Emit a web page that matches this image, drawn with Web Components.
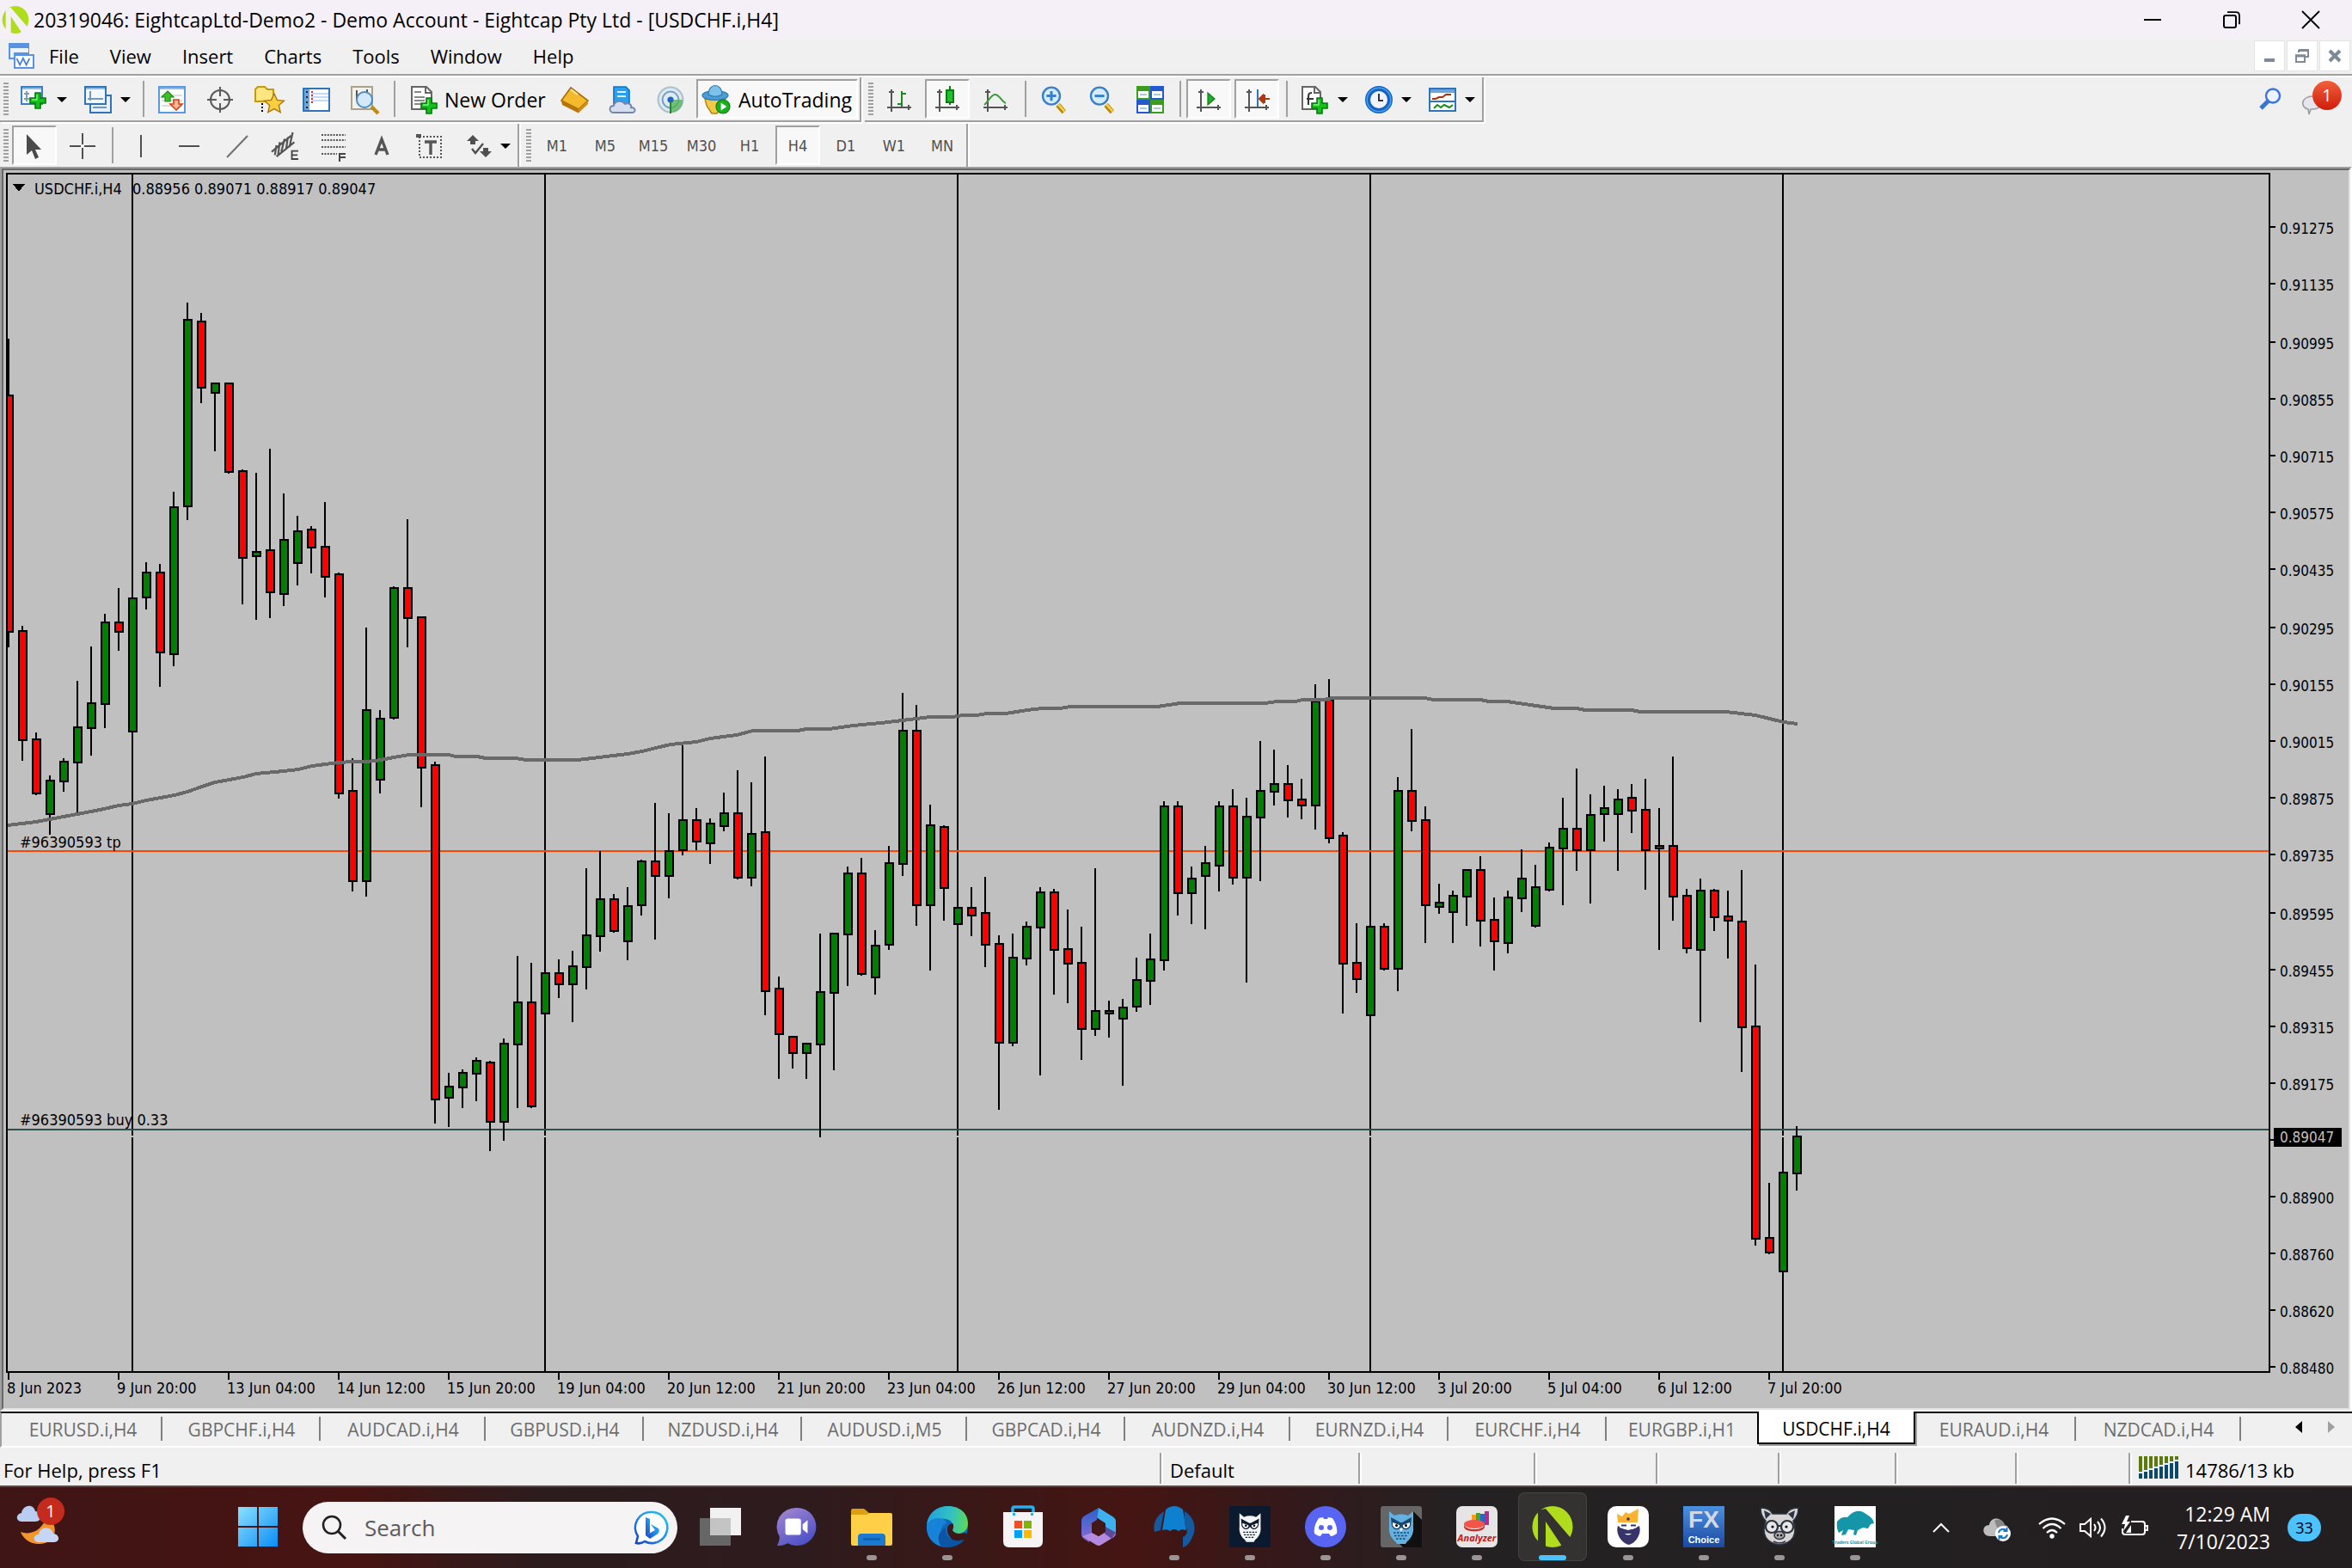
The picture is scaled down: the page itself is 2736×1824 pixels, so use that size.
<!DOCTYPE html>
<html lang="en">
<head>
<meta charset="utf-8">
<title>20319046: EightcapLtd-Demo2 - Demo Account</title>
<style>
  html, body { margin: 0; height: 100%; background: #f0f0f0; overflow: hidden; }
  body { font: 22px/30px "Open Sans", "Noto Sans", sans-serif; color: #000; }
  trade-app { --face: #f0f0f0; --shade: #a0a0a0; --dark: #696969; --silver: #c0c0c0;
    --chart-font: "DejaVu Sans Condensed", "DejaVu Sans", sans-serif; }
</style>
</head>
<body>
<trade-app></trade-app>
<script>
const RESET = `*{box-sizing:border-box} button{font:inherit;color:inherit;background:none;border:0;padding:0;margin:0;display:flex;align-items:center;justify-content:center} svg{display:block}`;
function define(name, css, html, ready) {
  customElements.define(name, class extends HTMLElement {
    constructor() { super(); this.attachShadow({ mode: 'open' }); }
    connectedCallback() {
      if (this.shadowRoot.firstChild) return;
      const body = typeof html === 'function' ? html(this) : html;
      this.shadowRoot.innerHTML = `<style>${RESET}${css}</style>${body}`;
      if (ready) ready(this);
    }
  });
}

/* ---------- icons: [view box size, markup] ---------- */
const plus = (x, y) => `<path d="M${x+3} ${y}h3v3h3v3h-3v3h-3v-3h-3v-3h3z" fill="#12c01c" stroke="#067a0b" stroke-width=".8"/><path d="M${x+4} ${y+1}v3h-3" stroke="#7df27f" fill="none" stroke-width=".7"/>`;
const axes = `<path d="M3.5 15V2M1 12.5h14" stroke="#555" stroke-width="1" fill="none"/><path d="M2 3.5h3M13.5 11v3" stroke="#555" stroke-width="1"/>`;
const lens = `<path d="M10.3 11l3.6 4.2" stroke="#b88710" stroke-width="3"/><path d="M10.6 10.8l3.6 4" stroke="#f4d14a" stroke-width="1.3"/><circle cx="6.5" cy="5.8" r="5" fill="#d4ecfb" stroke="#3b7fc4" stroke-width="1.2"/>`;
const owlFace = (c, e) => `<path d="M10 6l6 5c5-2 11-2 16 0l6-5v18c1 8-3 14-7 17l-2 3H19l-2-3c-4-3-8-9-7-17z" fill="${c}"/><path d="M12 13l11 6h2l11-6-1 10c-2 5-8 6-11 1-3 5-9 4-11-1z" fill="${e}"/><path d="M14 19l8 3c1 4-6 6-8 0zM34 19l-8 3c-1 4 6 6 8 0z" fill="#fff"/><circle cx="18.500" cy="22.500" r="1.500"/><circle cx="29.500" cy="22.500" r="1.500"/><path d="M22 26h4l-2 4z" fill="#fff"/><path d="M15 31h18M16 34.500h16M18 38h12" stroke="${e}" stroke-width="1.400" stroke-dasharray="2.500 1.500"/>`;
const ICONS = {
  logo: [48, `<ellipse cx="24" cy="24" rx="23" ry="24" fill="#b0dc1e"/><path d="M7 5L16 3 46 38 41 45 36 48 16 18V48L7 42z" fill="#f5f0f8"/>`],
  mdi: [16, `<g fill="#eaf4ff" stroke="#5a94e0" shape-rendering="crispEdges"><path d="M.500.500h12v9H.500z"/><path d="M.500 2h12" stroke-width="2"/><path d="M3.500 6.500h9v9h-9z"/><path d="M3.500 8h12" stroke-width="2"/><path d="M3.500 7.500h12v8h-12z" fill="#fff"/></g><path d="M5 9.500l2 4 2-4 2 4 2-4" fill="none" stroke="#4a84d6"/>`],
  newchart: [16, `<path d="M.500.500h12v10h-12z" fill="#f4faff" stroke="#3b7fc4"/><path d="M1 1.500h11" stroke="#8dbcea"/><path d="M3.500 3v6M2 4.500h3M2 7.500h3" stroke="#7f9db9"/>${plus(5.500,4)}`],
  profiles: [16, `<path d="M3.500 5.500h12v10h-12z" fill="#e6f1fb" stroke="#2f74b8"/><path d="M.500.500h12v10h-12z" fill="#f1f8ff" stroke="#2f74b8"/><path d="M1 1.500h11" stroke="#8dbcea"/><path d="M3.500 3v5.500M2 7.500h9M5 12.500h8" stroke="#7496b8"/>`],
  market: [16, `<path d="M.500.500h15v15H.500z" fill="#fff" stroke="#5a9ae0"/><path d="M1 1.500h14" stroke="#8dbcea"/><path d="M2 5.500h12M2 8.500h12M2 11.500h12" stroke="#ddd"/><path d="M5.500 3L9 6.500H7V9H4V6.500H2z" fill="#3fc02a" stroke="#1f8a12" stroke-width=".6"/><path d="M10.500 14L7 10.500h2V8h3v2.500h2z" fill="#ffb59a" stroke="#d8420e" stroke-width=".8"/>`],
  cross: [16, `<circle cx="8" cy="8" r="5.500" fill="none" stroke="#5a5a5a"/><path d="M8 .500v5.500M8 10v5.500M.500 8H6M10 8h5.500" stroke="#5a5a5a"/>`],
  favs: [16, `<path d="M.500 9V2l1.500-1.500h4L7.500 2H11v7z" fill="#ffe680" stroke="#c49a10"/><path d="M4.500 10v5" stroke="#000" stroke-dasharray="1 1"/><path d="M11.500 4.500l1.700 3.700 4 .4-3 2.700.9 4-3.600-2-3.600 2 .9-4-3-2.700 4-.4z" fill="#f8cf3f" stroke="#a9770c" stroke-width=".7"/>`],
  panel: [16, `<path d="M.500 1.500h15v13H.500z" fill="#fff" stroke="#2f74b8"/><path d="M1 2h3v12H1z" fill="#6aa6dc"/><path d="M2.500 3v11" stroke="#222" stroke-dasharray="1 2"/><path d="M5 4.500h10M5 6.500h10M5 8.500h10" stroke="#c4d8f8"/><path d="M5.500 3v7" stroke="#e03030" stroke-dasharray="1 1"/>`],
  tester: [16, `<path d="M.500.500h12v13H.500z" fill="#f3f1ea" stroke="#a9a28c"/><path d="M3.500 2.500v5M9.500 2v3" stroke="#555"/><circle cx="8" cy="8" r="4.500" fill="#cfe8fb" fill-opacity=".9" stroke="#4d8ac6"/><path d="M12 12l4 4" stroke="#c08d12" stroke-width="2.200"/>`],
  order: [16, `<path d="M.500.500H9l3 3v10H.500z" fill="#fff" stroke="#666"/><path d="M8.500 1v3h3" fill="none" stroke="#666"/><path d="M2 3.500h4M2 6.500h6M2 8.500h6M2 10.500h5" stroke="#888"/>${plus(6,7)}`],
  gold: [16, `<path d="M6 1l10 7.500-5.500 5L.500 8.500z" fill="#f5b92e" stroke="#a86c08" stroke-width=".8"/><path d="M.500 8.500l10 5v2.300L1 11z" fill="#b8730b"/><path d="M16 8.500v2l-5.500 5.300v-2.300z" fill="#d38e17"/><path d="M6 2l4 3" stroke="#ffe9a0"/>`],
  cloudbox: [16, `<path d="M3 .500h7l2 2v8H3z" fill="#2aa0f0" stroke="#1270c0" stroke-width=".8"/><path d="M5 3.500h5M5 6h5" stroke="#d8f0ff"/><path d="M3 15.500c-3 0-3-4 0-4 .5-3 5-3.500 6.500-1 3-1 4 1 3.500 2 3 0 3 3 .5 3z" fill="#d5deef" stroke="#7485aa" stroke-width=".9"/>`],
  signal: [16, `<circle cx="8" cy="8" r="7.200" fill="#dfe9ee" stroke="#a9bfcc"/><circle cx="8" cy="8" r="4.700" fill="none" stroke="#6f9fc8"/><path d="M8 8h7a7 7 0 0 1-7 7.500z" fill="#4fb04f" opacity=".75"/><circle cx="8" cy="8" r="1.800" fill="#2060d0"/><path d="M8 9v7" stroke="#18901c"/>`],
  auto: [17, `<path d="M2 8h12l-2 5-3 3.500H6L3 12z" fill="#f3c848" stroke="#b0820f" stroke-width=".7"/><ellipse cx="8" cy="6" rx="7.500" ry="2.700" fill="#4c9fd6" stroke="#2c78b0" stroke-width=".6"/><path d="M4 5.500c0-7 8-7 8 0-2 1.500-6 1.500-8 0z" fill="#7cc2ea" stroke="#2c78b0" stroke-width=".6"/><circle cx="12.500" cy="12.500" r="4" fill="#18b020" stroke="#0b7d10" stroke-width=".6"/><path d="M11.300 10.300v4.400l3.400-2.200z" fill="#fff"/>`],
  bars: [16, axes + `<path d="M9.500 3v9M9.500 4.500H12M7 10.500h2.500" stroke="#1a8a1a" fill="none"/>`],
  candles: [16, axes + `<path d="M9.500 0v11" stroke="#0b7d10"/><path d="M7.500 2.500h4v7h-4z" fill="#20c030" stroke="#0b7d10"/>`],
  line: [16, axes + `<path d="M1.500 11C4 9 5 5.500 7.500 5s4 4 6.500 5" stroke="#3c9a3c" fill="none"/>`],
  zoomin: [16, lens + `<path d="M6.500 3v5.600M3.700 5.800h5.600" stroke="#3b7fc4" stroke-width="1.500"/>`],
  zoomout: [16, lens + `<path d="M3.700 5.800h5.600" stroke="#3b7fc4" stroke-width="1.500"/>`],
  tile: [16, `<path d="M0 0h8v8H0zM8 8h8v8H8z" fill="#3c9c1e"/><path d="M8 0h8v8H8zM0 8h8v8H0z" fill="#2458d0"/><path d="M1 3h6v4H1zM9 3h6v4H9zM1 11h6v4H1zM9 11h6v4H9z" fill="#fff"/><path d="M2 5h4M10 5h4M2 13h4M10 13h4" stroke="#a8c8e8"/>`],
  scroll: [16, axes + `<path d="M7.500 4v7l4-3.500z" fill="#1fae2a" stroke="#0b7d10" stroke-width=".6"/>`],
  shift: [16, axes + `<path d="M8.500 2v10" stroke="#2f74b8"/><path d="M9.500 7.500h6M12.500 5v5M9.500 7.500l2-2v4z" stroke="#b0380c" fill="#b0380c"/>`],
  indic: [16, `<path d="M.500.500H8l3 3v10H.500z" fill="#fff" stroke="#666"/><path d="M7.500 1v3h3" fill="none" stroke="#666"/><path d="M6 4c-2 0-2 1-2 3v4M3 7.500h4" stroke="#333" fill="none"/>${plus(6,7)}`],
  clock: [16, `<circle cx="8" cy="8" r="6.500" fill="#eef4fa" stroke="#1763c4" stroke-width="3"/><circle cx="8" cy="8" r="6.900" fill="none" stroke="#45a0f0" stroke-width=".8"/><path d="M8 4.500v4h2.500" stroke="#333" fill="none"/>`],
  tmpl: [16, `<path d="M.500 1.500h15v13H.500z" fill="#fff" stroke="#2f74b8"/><path d="M1 2h14v2H1z" fill="#6aa6dc"/><path d="M1 9h14" stroke="#2f74b8"/><path d="M2 7.500h2l2-1h2l2-1.500h3" stroke="#a83010" fill="none"/><path d="M3 13l2-2 2 1.500L9 11l3 1.500 2-1.500" stroke="#1a8a1a" fill="none"/>`],
  arrowcur: [16, `<path d="M3.500 1v12l3-2.500 2 5 2-1-2-4.500H12z" fill="#4a4a4a"/>`],
  plain: [16, `<path d="M8 .500V7M8 9v6.500M.500 8H7M9 8h6.500" stroke="#505050"/>`],
  vline: [16, `<path d="M8 1.500v13" stroke="#505050"/>`],
  hline: [16, `<path d="M2 8h12" stroke="#505050"/>`],
  tline: [16, `<path d="M2 14.500L14 2" stroke="#707070"/>`],
  channel: [17, `<path d="M0 12L12 2M3 15L14 6M3 8l-1 6M5 6l-1 8M8 4L6 12M10 3L9 10M13 0l-2 9" stroke="#555" stroke-width="1.200"/><path d="M16.500 11.500h-4v5h4M12.500 14h3.500" stroke="#444" fill="none"/>`],
  fibo: [16, `<path d="M1 1.500h14M1 4.500h14M1 8.500h14M1 12.500h9" stroke="#555" stroke-dasharray="1 .7"/><path d="M15 12.500h-3.500V17M11.500 14.500H15" stroke="#444" fill="none"/>`],
  texta: [16, `<path d="M4.500 13L8 4l3.500 9M5.500 10h5" stroke="#555" stroke-width="1.700" fill="none"/>`],
  textt: [16, `<path d="M2 2.500h12.500v12H2z" fill="none" stroke="#555" stroke-dasharray="1 1"/><path d="M0 1h3v2H0z" fill="#555"/><path d="M5 5.500h7M8.500 5.500V13" stroke="#555" stroke-width="1.700"/>`],
  shapes: [16, `<path d="M5 1.500l3.500 3.500h-2v2h-3V5h-2zM12.500 14.500L9 11h2V9h3v2h2z" fill="#505050"/><path d="M4.500 9.500l2 2.500 4.500-5.500" stroke="#505050" fill="none" stroke-width="1.200"/>`],
  find: [26, `<path d="M2 24l9-9" stroke="#3b74d0" stroke-width="5"/><circle cx="16" cy="9.500" r="8" fill="#eef4ff" stroke="#3b74e0" stroke-width="2.400"/>`],
  bubble: [24, `<path d="M12 2c14 0 14 15 0 15h-2l-2 6-1-6C-3 15-1 2 12 2z" fill="#e6e6ec" stroke="#9c9ca2" stroke-width="1.600"/>`],
  /* window controls */
  wmin: [20, `<path d="M0 10h20" stroke="#000" stroke-width="2"/>`],
  wmax: [20, `<rect x="1" y="5" width="14" height="14" rx="2" fill="none" stroke="#000" stroke-width="2"/><path d="M5 1.200h10q4 0 4 4v10" fill="none" stroke="#000" stroke-width="1.800"/>`],
  wclose: [20, `<path d="M0 0l20 20M20 0L0 20" stroke="#000" stroke-width="1.800"/>`],
  cmin: [16, `<path d="M2 13h12" stroke="#7d8b99" stroke-width="4"/>`],
  cmax: [16, `<path d="M4 4V2h11v7h-3" fill="none" stroke="#7d8b99" stroke-width="2"/><path d="M4 1.500h12" stroke="#7d8b99" stroke-width="3"/><path d="M1 7.500h10V15H1z" fill="#fff" stroke="#7d8b99" stroke-width="2"/><path d="M0 8h12" stroke="#7d8b99" stroke-width="3"/>`],
  cclose: [16, `<path d="M2 2l12 12M14 2L2 14" stroke="#7d8b99" stroke-width="4"/>`],
  /* taskbar, 48 box */
  weather: [56, `<path d="M6 33c10 4 24 0 30-17 16 8 12 31-9 31-10 0-18-6-21-14z" fill="#f0962c"/><path d="M7 21c-7 0-7-9 0-10 2-10 14-11 16-2 8 0 9 12 0 12z" fill="#b9cdf0"/><path d="M27 45c-7 0-7-9 0-9 1-10 15-10 17-1 8 1 8 10 1 10z" fill="#c5d6f6"/>`],
  start: [48, `<defs><linearGradient id="g" x1="0" y1="0" x2="48" y2="48" gradientUnits="userSpaceOnUse"><stop offset="0" stop-color="#8ce0ff"/><stop offset="1" stop-color="#0b8df5"/></linearGradient></defs><path d="M0 0h23v23H0zM25 0h23v23H25zM0 25h23v23H0zM25 25h23v23H25z" fill="url(#g)"/>`],
  searchglass: [30, `<circle cx="12" cy="12" r="10" fill="none" stroke="#222" stroke-width="2.600"/><path d="M19 19l9 9" stroke="#222" stroke-width="3"/>`],
  bing: [40, `<defs><linearGradient id="g" x1="0" y1="1" x2="1" y2="0"><stop offset="0" stop-color="#1a3fb8"/><stop offset=".5" stop-color="#1f8ff0"/><stop offset="1" stop-color="#22c8e8"/></linearGradient></defs><path d="M20 2a18 18 0 1 1-8 34c-3 2-6 3-10 2l2-8A18 18 0 0 1 20 2z" fill="#fff" stroke="url(#g)" stroke-width="2.600"/><path d="M13 8l5 2v16l-5 3zM19 16l9 5c2 3 0 6-2 7l-8 5-5-4 11-6z" fill="url(#g)"/>`],
  taskview: [48, `<path d="M12 2h36v32H12z" fill="#f1f1f1"/><path d="M0 14h36v32H0z" fill="#666"/><path d="M12 14h24v20H12z" fill="#c4c4c4"/>`],
  chat: [48, `<defs><linearGradient id="g" x1="0" y1="0" x2=".6" y2="1"><stop offset="0" stop-color="#a88ad0"/><stop offset="1" stop-color="#4f52c8"/></linearGradient></defs><path d="M25 1a23 23 0 1 1-11 43c-4 2-8 3-13 3 2-4 3-7 3-11A23 23 0 0 1 25 1z" fill="url(#g)"/><rect x="11" y="14" width="19" height="20" rx="3" fill="#fff"/><path d="M32 21l6-5v16l-6-5z" fill="#fff"/>`],
  folder: [48, `<path d="M0 5q0-2 2-2h13l6 5h24v36H0z" fill="#dd9f12"/><path d="M0 10h18l4-2h24q2 0 2 2v34q0 2-2 2H2q-2 0-2-2z" fill="#ffcf48"/><path d="M8 46V36q0-4 4-4h24q4 0 4 4v10z" fill="#1a7ad0"/><path d="M14 38.500h20" stroke="#0c5aa8" stroke-width="2"/>`],
  edge: [48, `<defs><linearGradient id="g" x1="0" y1=".3" x2="1" y2=".4"><stop offset="0" stop-color="#1fa0e0"/><stop offset=".6" stop-color="#33c2c0"/><stop offset="1" stop-color="#5ad858"/></linearGradient></defs><circle cx="24" cy="24" r="24" fill="#0e68b8"/><path d="M0 22C2 6 14 0 25 0c14 0 23 9 23 20 0 8-6 12-12 12-5 0-8-2-6-5 2-4 0-11-8-12C12 14 2 18 0 22z" fill="url(#g)"/><path d="M0 23c1-6 8-9 14-9 6 0 9 4 9 6-8 2-9 16 3 24-2 3-6 4-9 3C6 44-1 34 0 23z" fill="#1683d8"/><path d="M30 28c2 4 8 5 14 3l4 2v6l-4 2c-10 4-20-4-20-14 0-4 2-6 6-7 2 2 1 6 0 8z" fill="#3b181a"/><path d="M22 26c-1 10 8 17 22 13-6 8-20 11-27 8-6-9-3-19 5-21z" fill="#0c55a4"/>`],
  store: [48, `<path d="M12 12V3q0-2 2-2h20q2 0 2 2v9" fill="none" stroke="#26b0f0" stroke-width="3.500"/><path d="M1 7h46v34q0 7-7 7H8q-7 0-7-7z" fill="#f6f4f4"/><path d="M12 8h3v3h-3zM33 8h3v3h-3z" fill="#26b0f0"/><path d="M14 17h9v9h-9z" fill="#f04e23"/><path d="M25 17h9v9h-9z" fill="#7db700"/><path d="M14 28h9v9h-9z" fill="#00a2ed"/><path d="M25 28h9v9h-9z" fill="#fdb900"/>`],
  m365: [48, `<defs><linearGradient id="g" x1="0" y1="0" x2="0" y2="1"><stop offset="0" stop-color="#2b62c8"/><stop offset="1" stop-color="#8a6ad8"/></linearGradient></defs><path d="M24 2l16 10q4 2 4 6v13L31 24v-4l-12-9z" fill="#3db0ee"/><path d="M24 2l-2 14-6 4v12l-3 10-6-4q-3-2-3-5V17q0-4 4-6z" fill="url(#g)"/><path d="M5 35l11-4 8 4 8-5 12 1q0 4-4 6L27 45q-3 2-6 0z" fill="#b48ae0"/><path d="M32 24l12 7-5 7-8-6z" fill="#5c4a9c"/><path d="M24 15l8 5v10l-8 5-8-5V20z" fill="#431617"/>`],
  wing: [48, `<path d="M14 4Q24-4 34 4l4 24q-6-2-9 1-5-4-10 0-3-3-9-1z" fill="#0f80cf"/><path d="M12 6C2 12-1 22 1 30l7-2zM36 6c13 8 14 22 8 32-2 5-6 9-10 10V36c6-2 6-10 2-14z" fill="#155a9e"/>`],
  owl: [48, `<path d="M0 0h48v48H0z" fill="#0b1a2e"/><g transform="translate(3 3) scale(.88)">${owlFace('#f4f4f4','#0b1a2e')}</g>`],
  discord: [48, `<circle cx="24" cy="24" r="24" fill="#5865f2"/><path d="M16 14l5-1 1 2h4l1-2 5 1c4 6 6 12 5 18-3 2-5 3-7 3l-2-3h-8l-2 3c-2 0-4-1-7-3-1-6 1-12 5-18z" fill="#fff"/><circle cx="19" cy="25" r="3" fill="#5865f2"/><circle cx="29" cy="25" r="3" fill="#5865f2"/>`],
  owl2: [48, `<rect width="48" height="48" rx="3" fill="#666"/><path d="M38 6l10 10v32H26l-8-8z" fill="#101010"/>${owlFace('#64b0e0','#17476c')}`],
  analyzer: [48, `<rect width="48" height="48" rx="7" fill="#e6e4e4"/><path d="M18 10h5v12h-5z" fill="#f0a020"/><path d="M23 8h5v16h-5z" fill="#3fa82c"/><path d="M28 9h5v14h-5z" fill="#2468c8"/><path d="M33 6h5v16h-5z" fill="#b02c90"/><ellipse cx="21" cy="21" rx="12" ry="5" fill="#f2554a"/><path d="M9 21c0 8 24 8 24 0v3c0 7-24 7-24 0z" fill="#c82820"/>`],
  n: [48, `<ellipse cx="24" cy="24" rx="23.500" ry="24" fill="#b0dc1e"/><path d="M7 5L16 3 46 38 41 45 36 48 16 18V48L7 42z" fill="#343131"/>`],
  beard: [48, `<rect width="48" height="48" rx="10" fill="#fff"/><path d="M12 19L11 9l6 3 4-5 4 2 11-6-1 16z" fill="#f9b233"/><path d="M12 23l8 4c3-2 6-2 9 0l8-4c3 9-4 20-12 22-9-2-16-13-13-22z" fill="#37336b"/><path d="M14 20h20v5l-10 3-10-3z" fill="#fff"/><path d="M16 22.500h6M27 22.500h6" stroke="#37336b" stroke-width="2"/><path d="M20 32q4 3 8 0z" fill="#fff"/><circle cx="24" cy="15" r="1.800" fill="#37336b"/>`],
  fx: [48, `<defs><linearGradient id="g" x1="0" y1="0" x2="0" y2="1"><stop offset="0" stop-color="#4a90e0"/><stop offset="1" stop-color="#1c48a0"/></linearGradient></defs><path d="M0 0h48v48H0z" fill="url(#g)"/>`],
  pig: [48, `<path d="M2 2q11 0 14 7h16q3-7 14-7 0 10-6 15 6 18-6 25-10 6-20 0-12-7-6-25-6-5-6-15z" fill="#d8d4d4" stroke="#2a3340" stroke-width="1.600"/><path d="M6 5l8 4-6 6zM42 5l-8 4 6 6z" fill="#2a3340"/><circle cx="15" cy="24" r="7" fill="#e8e6e6" stroke="#2a3340" stroke-width="2.200"/><circle cx="33" cy="24" r="7" fill="#e8e6e6" stroke="#2a3340" stroke-width="2.200"/><path d="M22 23h4" stroke="#2a3340" stroke-width="2"/><circle cx="16" cy="24" r="1.600"/><circle cx="32" cy="24" r="1.600"/><ellipse cx="24" cy="34" rx="6" ry="4.500" fill="#aaa5a5" stroke="#2a3340" stroke-width="1.500"/><circle cx="22" cy="34" r="1.200"/><circle cx="26" cy="34" r="1.200"/><path d="M17 41q7 4 14 0" stroke="#2a3340" fill="none" stroke-width="1.500"/>`],
  bull: [48, `<path d="M0 0h48v48H0z" fill="#fff"/><path d="M3 18Q8 12 15 13 26 0 38 10q7 4 8 10l-4 1-3 5-6-1-6 3-2 6-3-1 1-5-7-1-3 6-5 1 2-6-5 3q-3-5-2-13z" fill="#1596a8"/>`],
  chev: [20, `<path d="M1 15l9-9 9 9" fill="none" stroke="#fff" stroke-width="2"/>`],
  cloud: [32, `<path d="M8 26C-2 26-2 13 7 13 8 3 22 3 24 13c8 0 8 13 0 13z" fill="#bdbdbd"/><path d="M13 8c6-4 12 0 13 9l-8 4z" fill="#888"/><circle cx="23" cy="23" r="9" fill="#fff"/><path d="M18 22a5 5 0 0 1 9-2M28 24a5 5 0 0 1-9 2M27.500 16v4h-4M18.500 30v-4h4" stroke="#1878d0" fill="none" stroke-width="2"/>`],
  wifi: [32, `<path d="M1 12Q16-1 31 12M5.500 17Q16 7 26.500 17M10 22Q16 16 22 22" fill="none" stroke="#fff" stroke-width="2.300"/><circle cx="16" cy="26" r="2.700" fill="#fff"/>`],
  sound: [32, `<path d="M1 12h5l7-6v20l-7-6H1z" fill="none" stroke="#fff" stroke-width="2"/><path d="M17 12q3 4 0 8M21 9q6 7 0 14M25 5.500q9 10.500 0 21" fill="none" stroke="#fff" stroke-width="2"/>`],
  batt: [32, `<path d="M12 9h13q3 0 3 3v9q0 3-3 3H5q-3 0-3-3v-4M28 14h3v5h-3" fill="none" stroke="#fff" stroke-width="2"/><path d="M6 2L1 12h4l-2 8 8-11H7l3-7zM12 13l-6 9h6z" fill="#fff"/>`],
};
define('ui-icon', `:host{display:block;flex:none} svg{width:100%;height:100%;overflow:visible}`, el => {
  const [box, art] = ICONS[el.getAttribute('name')];
  const s = (el.getAttribute('size') || 32) + 'px';
  el.style.width = s; el.style.height = s;
  return `<svg viewBox="0 0 ${box} ${box}" aria-hidden="true">${art}</svg>`;
});

/* ---------- title and menu ---------- */
define('title-bar', `
  :host{display:flex;align-items:center;height:46px;background:#f5f0f8;padding:0 2px}
  h1{margin:0 0 0 5px;font:inherit;font-size:23px;flex:1;white-space:nowrap}
  button{width:92px;height:46px}`,
  `<ui-icon name="logo"></ui-icon><h1><slot></slot></h1>
   <button aria-label="Minimize"><ui-icon name="wmin" size="20"></ui-icon></button>
   <button aria-label="Restore"><ui-icon name="wmax" size="20"></ui-icon></button>
   <button aria-label="Close"><ui-icon name="wclose" size="20"></ui-icon></button>`);

define('menu-bar', `
  :host{display:block;border-bottom:2px solid #fff}
  div{display:flex;align-items:center;height:42px;padding:0 2px 2px 10px;border-bottom:2px solid var(--shade)}
  nav{display:flex;flex:1;padding-left:17px;gap:36px}
  .w{display:flex;gap:2px}
  .w button{width:36px;height:36px;background:#fff;border:1px solid #e4e4e4}`,
  `<div><ui-icon name="mdi" size="30"></ui-icon>
   <nav>${'File View Insert Charts Tools Window Help'.split(' ').map(t => `<button>${t}</button>`).join('')}</nav>
   <span class="w"><button aria-label="Minimize chart"><ui-icon name="cmin" size="16"></ui-icon></button>
   <button aria-label="Restore chart"><ui-icon name="cmax" size="16"></ui-icon></button>
   <button aria-label="Close chart"><ui-icon name="cclose" size="16"></ui-icon></button></span></div>`);

/* ---------- toolbars ---------- */
define('tool-button', `
  :host{display:flex;flex:none;width:56px;padding:2px;height:50px}
  :host([drop]){width:74px} :host([drop]) button{justify-content:flex-start;padding-left:8px;gap:10px}
  button{flex:1;border:2px solid transparent;padding-top:2px;font-size:23px;white-space:nowrap}
  :host([on]) button{background:#f8f8f8;border-color:var(--shade) #fff #fff var(--shade)}
  :host([small]) button{font:18px/22px var(--chart-font);color:#505050}
  :host([order]){width:176px} :host([order]) button{justify-content:flex-start;padding-left:10px;gap:7px}
  :host([auto]){width:192px} :host([auto]) button{justify-content:flex-start;padding-left:4px;gap:9px}
  i{width:0;height:0;border:6px solid transparent;border-top-color:#000;border-bottom:0}`,
  el => `<button aria-label="${el.title || el.textContent}">${el.hasAttribute('icon') ? `<ui-icon name="${el.getAttribute('icon')}" size="${el.hasAttribute('auto') ? 34 : 32}"></ui-icon>` : ''}<slot></slot>${el.hasAttribute('drop') ? '<i></i>' : ''}</button>`);
define('tool-sep', `:host{display:block;flex:none;width:12px;padding:4px 4px 4px 6px;height:50px} div{height:42px;border-left:2px solid var(--shade)}`, `<div></div>`);
define('tool-group', `
  :host{display:flex;flex:none;height:50px;margin-right:4px;padding-left:4px;border-right:2px solid var(--shade);box-shadow:2px 0 #fff}
  :host([lined]){height:52px;border-bottom:2px solid var(--shade);box-shadow:2px 2px #fff}
  span{flex:none;width:6px;height:38px;margin:6px 2px 0 0;background:repeating-linear-gradient(var(--shade) 0 2px,transparent 2px 4px)}`,
  `<span></span><slot></slot>`);
define('tool-row', `:host{display:flex;height:54px} :host([last]){height:50px} .end{margin-left:auto;display:flex;align-items:flex-start;gap:24px;padding:12px 12px 0 0}`,
  `<slot></slot><div class="end"><slot name="end"></slot></div>`);
define('news-badge', `
  :host{display:block;position:relative;width:46px;height:32px}
  ui-icon{margin-top:8px} b{position:absolute;left:12px;top:-8px;width:34px;height:34px;border-radius:50%;background:linear-gradient(#f0603c,#d01c0c);color:#fff;font:20px/34px "Open Sans",sans-serif;text-align:center}`,
  `<ui-icon name="bubble" size="24"></ui-icon><b>1</b>`);

const tb = (icon, title, extra = '') => `<tool-button icon="${icon}" title="${title}" ${extra}></tool-button>`;
const SEP = '<tool-sep></tool-sep>';
const ROW1 = `<tool-row><tool-group lined>${tb('newchart','New Chart','drop')}${tb('profiles','Profiles','drop')}${SEP}
${tb('market','Market Watch')}${tb('cross','Data Window')}${tb('favs','Navigator')}${tb('panel','Terminal')}${tb('tester','Strategy Tester')}${SEP}
<tool-button order icon="order">New Order</tool-button>${tb('gold','MetaEditor')}${tb('cloudbox','Hosting')}${tb('signal','Signals')}
<tool-button auto on icon="auto">AutoTrading</tool-button></tool-group>
<tool-group lined>${tb('bars','Bar Chart')}${tb('candles','Candlesticks','on')}${tb('line','Line Chart')}${SEP}
${tb('zoomin','Zoom In')}${tb('zoomout','Zoom Out')}${tb('tile','Tile Windows')}${SEP}
${tb('scroll','Auto Scroll','on')}${tb('shift','Chart Shift','on')}${SEP}
${tb('indic','Indicators','drop')}${tb('clock','Periods','drop')}${tb('tmpl','Templates','drop')}</tool-group>
<ui-icon slot="end" name="find" size="26"></ui-icon><news-badge slot="end"></news-badge></tool-row>`;
const ROW2 = `<tool-row last><tool-group>${tb('arrowcur','Cursor','on')}${tb('plain','Crosshair')}${SEP}
${tb('vline','Vertical Line')}${tb('hline','Horizontal Line')}${tb('tline','Trendline')}${tb('channel','Channel')}${tb('fibo','Fibonacci')}${tb('texta','Text')}${tb('textt','Text Label')}${tb('shapes','Arrows','drop')}</tool-group>
<tool-group>${'M1 M5 M15 M30 H1 H4 D1 W1 MN'.split(' ').map(t => `<tool-button small ${t === 'H4' ? 'on' : ''}>${t}</tool-button>`).join('')}</tool-group></tool-row>`;

/* ---------- chart ---------- */
/* each candle: high, body top, body bottom, low; R falls, G rises */
const CANDLES = `R394,459,736,753 R728,733,862,885 R852,859,924,925 G902,907,948,971 G882,885,910,921 G792,845,888,945 G752,817,848,879 G714,723,820,847 R684,723,736,757 G695,695,852,852
G654,665,696,709 R656,665,760,799 G572,589,762,775 G352,371,590,605 R364,373,452,469 G445,445,458,525 R445,445,550,551 R546,547,650,703 G550,641,648,721 R522,639,690,719
G574,627,692,705 G600,617,656,681 R612,615,638,667 R584,635,672,695 R666,667,924,929 R882,919,1026,1037 G730,825,1026,1043 G826,835,908,923 G682,683,836,837 R604,683,720,753
R717,717,894,939 R886,889,1280,1307 G1248,1263,1278,1311 G1244,1247,1266,1289 G1230,1233,1250,1281 R1234,1235,1306,1339 G1208,1213,1306,1327 G1112,1165,1216,1289 R1120,1165,1288,1289 G1131,1131,1180,1180
R1116,1131,1146,1161 G1106,1123,1146,1189 G1010,1087,1126,1151 G990,1045,1090,1107 R1040,1045,1084,1085 G1032,1053,1096,1117 G1000,1001,1054,1065 R934,1001,1020,1093 G946,989,1020,1045 G866,953,990,995
R940,953,980,989 G952,957,982,1005 G922,945,962,967 R896,945,1022,1023 G910,969,1022,1031 R880,967,1154,1181 R1136,1149,1204,1255 R1205,1205,1226,1243 G1213,1213,1226,1255 G1086,1153,1216,1323
G1085,1085,1156,1245 G1008,1015,1088,1147 R998,1015,1134,1135 G1082,1099,1138,1157 G984,1003,1100,1105 G806,849,1006,1019 R820,849,1054,1077 G936,959,1054,1129 R960,961,1034,1071 G1055,1055,1076,1076
R1032,1055,1066,1089 R1020,1061,1100,1125 R1088,1097,1214,1291 G1086,1113,1214,1217 G1072,1077,1116,1123 G1032,1037,1080,1251 R1034,1037,1106,1157 R1058,1103,1122,1167 R1078,1119,1198,1233 G1010,1175,1198,1205
R1164,1175,1180,1207 G1162,1171,1186,1263 G1114,1139,1172,1177 G1086,1115,1142,1169 G932,937,1118,1129 R932,937,1040,1065 G1008,1021,1040,1075 G984,1003,1020,1081 G932,937,1008,1037 R918,937,1022,1029
G928,949,1022,1143 G862,919,952,1025 G872,911,922,937 R890,911,932,951 R906,929,938,953 G796,815,938,965 R790,813,976,981 R968,971,1122,1179 R1074,1119,1140,1155 G1077,1077,1182,1182
R1074,1077,1128,1129 G904,919,1128,1153 R848,919,956,967 R938,953,1054,1097 G1028,1049,1056,1063 G1036,1041,1062,1097 G1011,1011,1044,1077 R996,1011,1072,1101 R1044,1069,1096,1129 G1036,1043,1098,1109
G988,1021,1046,1061 G1006,1031,1078,1079 G980,985,1036,1037 G928,963,988,1053 R894,963,990,1013 G924,947,990,1051 G914,939,948,979 G918,929,948,1013 R912,927,944,969 R906,941,990,1035
G940,983,988,1105 R880,983,1044,1071 R1034,1041,1104,1109 G1022,1035,1106,1189 R1034,1035,1068,1083 R1036,1065,1072,1115 R1012,1071,1196,1247 R1122,1193,1442,1449 R1376,1439,1458,1459 G1363,1363,1480,1480
G1310,1321,1366,1385`.split(/\s+/).map(s => ({ up: s[0] === 'G', v: s.slice(1).split(',').map(Number) }));
const MA = '9,960 42,956 58,953 74,950 90,947 106,944 121,941 138,937 154,935 170,931 187,928 203,925 218,921 235,915 250,910 267,907 283,904 298,900 330,897 347,895 363,891 394,887 410,886 427,886 443,884 458,881 476,878 522,878 530,880 555,880 565,882 600,882 612,884 672,884 697,881 730,877 747,874 763,870 780,866 810,863 826,859 857,855 876,850 928,850 938,848 965,848 985,845 1002,843 1025,841 1066,836 1082,834 1108,834 1120,832 1136,832 1148,830 1170,830 1195,826 1212,824 1233,824 1245,822 1346,822 1373,818 1472,818 1485,816 1507,816 1515,814 1540,814 1550,812 1658,812 1667,814 1722,814 1732,816 1753,816 1780,820 1808,824 1834,824 1844,826 1898,826 1908,828 2008,828 2042,832 2075,840 2091,842';
const PRICES = [266,332,400,466,532,598,664,732,798,864,930,996,1064,1130,1196,1262].map((y, i) => [y, (0.91275 - i * 0.0014).toFixed(5)])
  .concat([[1394,'0.88900'],[1460,'0.88760'],[1526,'0.88620'],[1592,'0.88480']]);
const TIMES = ['8 Jun 2023','9 Jun 20:00','13 Jun 04:00','14 Jun 12:00','15 Jun 20:00','19 Jun 04:00','20 Jun 12:00','21 Jun 20:00','23 Jun 04:00','26 Jun 12:00','27 Jun 20:00','29 Jun 04:00','30 Jun 12:00','3 Jul 20:00','5 Jul 04:00','6 Jul 12:00','7 Jul 20:00'];
const rect = (x, y, w, h, f) => `<rect x="${x}" y="${y}" width="${w}" height="${h}" fill="${f}"/>`;

define('chart-plot', `
  :host{display:block;position:relative;border:2px solid #000;overflow:hidden;min-width:0;min-height:0}
  svg{position:absolute;inset:0;width:100%;height:100%} text{font:18px var(--chart-font)}`, () => {
  let s = '';
  for (let i = 9; i < 131; i += 30) s += `<rect x="${9 + i * 16}" y="203" width="2" height="100%" fill="#000"/>`;
  s += `<rect x="9" y="989" width="100%" height="2" fill="#ff4500"/><rect x="9" y="1313" width="100%" height="2" fill="#2f4f4f"/><rect x="9" y="1321" width="100%" height="2" fill="#c0c0c0"/>`;
  CANDLES.forEach(({ up, v: [h, t, b, l] }, i) => {
    const x = 9 + i * 16;
    s += rect(x, h, 2, l - h, '#000') + rect(x - 4, t, 11, b - t, '#000') + rect(x - 2, t + 2, 7, b - t - 4, up ? '#008000' : '#f00');
  });
  s += `<polyline points="${MA}" fill="none" stroke="#696969" stroke-width="4"/>`;
  s += `<text x="23" y="986">#96390593 tp</text><text x="23" y="1309">#96390593 buy 0.33</text>`;
  s += `<path d="M15 214h14l-7 9z"/><text x="40" y="226">USDCHF.i,H4</text><text x="154" y="226">0.88956 0.89071 0.88917 0.89047</text>`;
  return `<svg role="img" aria-label="USDCHF four hour candles"><g transform="translate(-9 -203)" shape-rendering="crispEdges">${s}</g></svg>`;
});
define('price-axis', `
  :host{display:block;position:relative;min-width:0} svg{position:absolute;inset:0;width:100%;height:100%;overflow:visible} text{font:17px var(--chart-font)}`, () => {
  let s = PRICES.map(([y, t]) => rect(2641, y - 3, 6, 2, '#000') + `<text x="2652" y="${y + 6}">${t}</text>`).join('');
  s += rect(2641, 1325, 6, 2, '#000') + rect(2645, 1312, 79, 22, '#000') + `<text x="2652" y="1329" fill="#c0c0c0">0.89047</text>`;
  return `<svg><g transform="translate(-2641 -201)">${s}</g></svg>`;
});
define('time-axis', `
  :host{display:flex;padding-left:2px;font:18px/20px var(--chart-font);overflow:hidden}
  span{flex:0 0 128px;white-space:nowrap;margin-left:-1px;margin-right:1px} span::before{content:"";display:block;width:2px;height:8px;background:#000;margin:0 0 0 1px}`,
  TIMES.map(t => `<span>${t}</span>`).join(''));
define('chart-window', `
  :host{display:flex;flex:1;min-height:0;border-top:2px solid var(--shade);border-left:2px solid var(--shade);border-right:2px solid #fff;border-bottom:2px solid #fff}
  main{flex:1;min-width:0;display:grid;grid-template:minmax(0,1fr) 41px/minmax(0,1fr) 91px;padding:3px 0 0 3px;background:var(--silver);border-top:2px solid var(--dark);border-left:2px solid var(--dark);border-right:2px solid #e3e3e3;border-bottom:2px solid #e3e3e3}
  time-axis{grid-column:1/3}`,
  `<main><chart-plot></chart-plot><price-axis></price-axis><time-axis></time-axis></main>`);

/* ---------- tabs and status ---------- */
const TABS = [['EURUSD.i,H4',185],['GBPCHF.i,H4',184],['AUDCAD.i,H4',192],['GBPUSD.i,H4',184],['NZDUSD.i,H4',184],['AUDUSD.i,M5',192],['GBPCAD.i,H4',184],['AUDNZD.i,H4',192],['EURNZD.i,H4',184],['EURCHF.i,H4',184],['EURGBP.i,H1',175],['USDCHF.i,H4',184],['EURAUD.i,H4',187],['NZDCAD.i,H4',192]];
define('tab-strip', `
  :host{display:flex;height:42px;padding-left:2px;border-left:2px solid var(--shade);border-top:2px solid #000;border-bottom:2px solid #fff;font-size:21px;color:#6d6d6d}
  button{flex:none;width:var(--w);height:38px;position:relative;white-space:nowrap}
  button::after{content:"";position:absolute;right:0;top:4px;height:28px;border-right:2px solid #808080}
  .on{background:#fff;color:#000;border:2px solid #000;border-top:0;margin-top:-2px;padding-top:4px;box-shadow:2px 2px var(--shade)}
  .on::after,.pre::after{display:none}
  .on+button{padding-right:4px}
  nav{margin-left:auto;display:flex;gap:30px;padding:9px 20px 0 0}
  nav button{width:8px;height:14px;padding:0} nav button::after{display:none}
  nav svg{width:8px;height:14px}`,
  TABS.map(([t, w], i) => `<button class="${i === 11 ? 'on' : i === 10 ? 'pre' : ''}" style="--w:${w}px">${t}</button>`).join('') +
  `<nav><button aria-label="Scroll left"><svg viewBox="0 0 8 14"><path d="M8 0v14L0 7z"/></svg></button><button aria-label="Scroll right"><svg viewBox="0 0 8 14"><path d="M0 0v14l8-7z" fill="#a0a0a0"/></svg></button></nav>`);
define('status-bar', `
  :host{display:flex;height:44px;padding:6px 0 2px 4px;align-items:stretch;font-size:22px;line-height:40px}
  span{flex:none;width:var(--w);border-left:2px solid var(--shade);box-shadow:inset 2px 0 #fff;padding-left:10px;white-space:nowrap}
  .help{flex:1;border:0;box-shadow:none;padding:0}
  .net{display:flex;gap:8px}
  .net svg{margin-top:4px}`,
  () => `<span class="help">For Help, press F1</span><span style="--w:231px">Default</span>` +
  [204,142,142,136,140,132].map(w => `<span style="--w:${w}px"></span>`).join('') +
  `<span class="net" style="--w:260px"><svg width="46" height="26">${[0,1,2,3,4,5,6,7].map(i => rect(i * 6, 0, 4, [18,16,14,12,10,8,6,4][i], '#5a7a0a') + rect(i * 6, 20 - i * 2, 4, 6 + i * 2, '#0a4a68')).join('')}</svg>14786/13 kb</span>`);

/* ---------- taskbar ---------- */
define('task-icon', `
  :host{display:flex;flex:none;width:88px;height:94px;padding:6px 4px 8px;justify-content:center}
  button{width:80px;height:80px;border-radius:8px;position:relative}
  :host([active]) button{background:#343131;box-shadow:inset 0 0 0 1px #454242}
  :host([dot]) button::after,:host([active]) button::after{content:"";position:absolute;left:34px;bottom:1px;width:12px;height:6px;border-radius:3px;background:#9a9494}
  :host([active]) button::after{left:24px;width:32px;background:#4cc2ff}`,
  el => `<button aria-label="${el.title}"><ui-icon name="${el.getAttribute('icon')}" size="${el.getAttribute('size') || 48}"></ui-icon></button>`);
define('label-icon', `
  :host{display:flex;flex:none;width:88px;height:94px;padding:6px 4px 8px}
  button{width:80px;height:80px;display:grid;position:relative} button>*{grid-area:1/1;justify-self:center}
  button::after{content:"";position:absolute;left:34px;bottom:1px;width:12px;height:6px;border-radius:3px;background:#9a9494}
  span{position:relative;width:48px;height:48px;display:flex;flex-direction:column;justify-content:flex-end;align-items:center;white-space:nowrap}
  .analyzer{font:italic 700 11px/22px "Open Sans",sans-serif;color:#c01818}
  .fx{color:#fff;font:700 11px/14px "Liberation Sans",sans-serif;padding-bottom:2px} .fx b{font-size:28px;line-height:32px;color:#d4d8e0}
  .bull{font:700 5px/12px "Open Sans",sans-serif;color:#1596a8}`,
  el => { const n = el.getAttribute('icon'); return `<button aria-label="${el.title}"><ui-icon name="${n}" size="48"></ui-icon><span class="${n}"><slot></slot>${n === 'fx' ? '<b>FX</b>Choice' : ''}</span></button>`; });
define('task-bar', `
  :host{display:flex;align-items:center;height:96px;border-top:2px solid #554a4a;color:#fff;
    background:linear-gradient(90deg,#3f1515 0,#471412 15%,#2c1c1e 23%,#2e1b1d 34%,#451512 48%,#33191b 55%,#242122 62%,#231f20 100%)}
  .weather{flex:0 0 256px;padding:0 0 0 18px;position:relative;display:block;height:56px;text-align:left}
  .weather b{position:absolute;left:43px;top:-7px;width:32px;height:32px;border-radius:50%;background:#c42b1c;font:20px/32px "Open Sans",sans-serif;text-align:center}
  label{display:flex;align-items:center;flex:none;width:436px;height:60px;margin:0 6px 0 8px;padding:0 10px 0 22px;border-radius:30px;background:#f6f3f4}
  input{flex:1;min-width:0;border:0;outline:0;background:none;font:26px/34px "Open Sans",sans-serif;padding:0 0 0 20px;color:#222} input::placeholder{color:#5c5c5c;opacity:1}
  .tray{margin-left:auto;display:flex;align-items:center;padding-right:36px}
  .tray>:nth-child(1){margin-right:39px} .tray>:nth-child(2){margin-right:32px} .tray>:nth-child(3),.tray>:nth-child(4){margin-right:16px}
  time{width:142px;text-align:right;font-size:23px;line-height:32px;white-space:nowrap}
  .tray b{margin-left:20px;width:39px;height:32px;border-radius:16px;background:#4cc2ff;color:#000;font:18px/32px "Open Sans",sans-serif;text-align:center}`,
  `<button class="weather" aria-label="Weather"><ui-icon name="weather" size="56"></ui-icon><b>1</b></button>
   <task-icon icon="start" title="Start" size="46"></task-icon>
   <label><ui-icon name="searchglass" size="30"></ui-icon><input placeholder="Search" aria-label="Search"><ui-icon name="bing" size="40"></ui-icon></label>
   <task-icon icon="taskview" title="Task View"></task-icon><task-icon icon="chat" title="Chat" size="46"></task-icon>
   <task-icon icon="folder" title="File Explorer" dot></task-icon><task-icon icon="edge" title="Edge" dot></task-icon>
   <task-icon icon="store" title="Store"></task-icon><task-icon icon="m365" title="Microsoft 365"></task-icon>
   <task-icon icon="wing" title="Terminal" dot></task-icon><task-icon icon="owl" title="Owl" dot></task-icon>
   <task-icon icon="discord" title="Discord" dot></task-icon><task-icon icon="owl2" title="Owl Trader" dot></task-icon>
   <label-icon icon="analyzer" title="Analyzer">Analyzer</label-icon><task-icon icon="n" title="Eightcap" active></task-icon>
   <task-icon icon="beard" title="King" dot></task-icon><label-icon icon="fx" title="FX Choice"></label-icon>
   <task-icon icon="pig" title="Pig" dot></task-icon><label-icon icon="bull" title="Traders">Traders Global Group</label-icon>
   <div class="tray"><ui-icon name="chev" size="20"></ui-icon><ui-icon name="cloud"></ui-icon><ui-icon name="wifi"></ui-icon><ui-icon name="sound"></ui-icon><ui-icon name="batt"></ui-icon>
   <time>12:29 AM<br>7/10/2023</time><b>33</b></div>`);

define('trade-app', `:host{display:flex;flex-direction:column;height:100vh;background:var(--face)} :host>*{flex-shrink:0} chart-window{flex:1}`,
  `<title-bar>20319046: EightcapLtd-Demo2 - Demo Account - Eightcap Pty Ltd - [USDCHF.i,H4]</title-bar>
   <menu-bar></menu-bar>${ROW1}${ROW2}<chart-window></chart-window><tab-strip></tab-strip><status-bar></status-bar><task-bar></task-bar>`);
</script>
</body>
</html>
